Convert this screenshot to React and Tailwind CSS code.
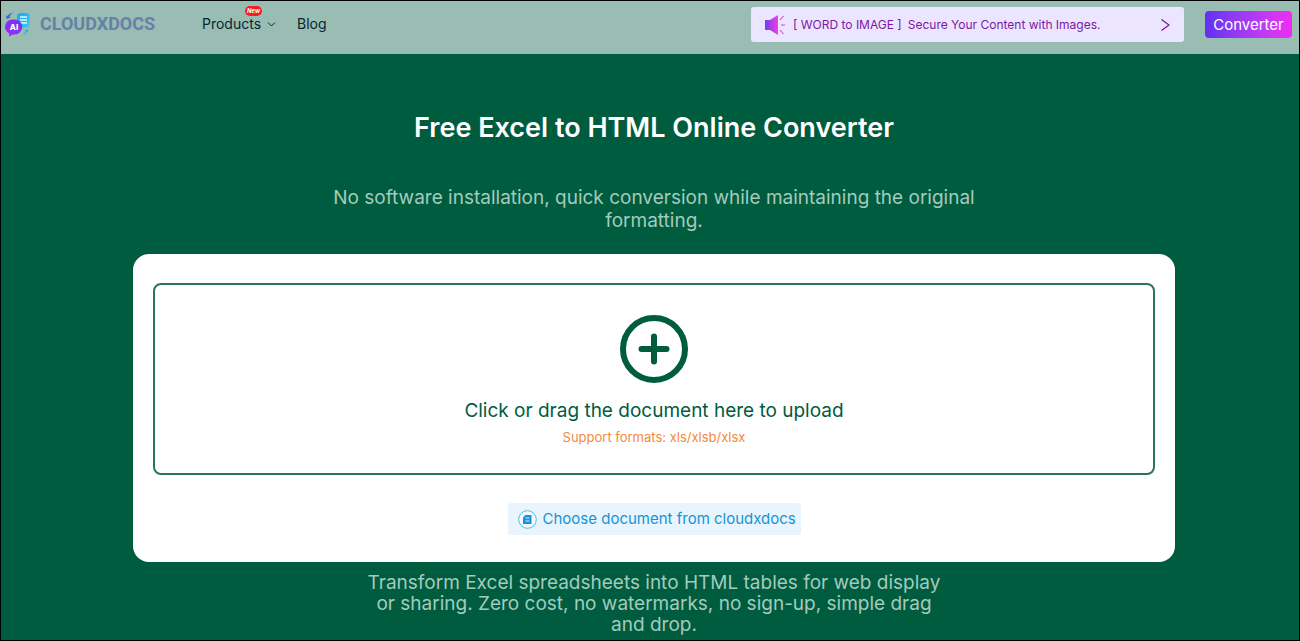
function Logo() {
  return (
    <svg className="h-[26px] w-[26px] shrink-0" viewBox="0 0 26 26" aria-hidden="true">
      <defs>
        <linearGradient id="logoDoc" x1="0" y1="0" x2="1" y2="1">
          <stop offset="0" stopColor="#1aa5f0" />
          <stop offset="1" stopColor="#3cc8fa" />
        </linearGradient>
        <linearGradient id="logoBubble" x1="0" y1="1" x2="1" y2="0">
          <stop offset="0" stopColor="#a22bf5" />
          <stop offset="1" stopColor="#6d36ee" />
        </linearGradient>
      </defs>
      <rect x="12" y="2" width="12.500" height="14.500" rx="4" fill="url(#logoDoc)" />
      <path d="M15 6h7M15 9h7M15 12h7" stroke="#e2f6ff" strokeWidth="1.600" />
      <path d="M9 1.500C5.500 2 3.500 3 2.500 5L1 4.500l.5 3.500L6 6.500 4.500 5.700C5 4 6.500 2.500 9 1.500Z" fill="#4268d8" />
      <path d="M17 24.500c3-.5 4.500-2 5-4l1.500.6-.7-3-3.500 1.600 1.400.5c-.5 2-1.700 3.300-3.700 4.300Z" fill="#27aee9" />
      <path d="M9 8.500a8.200 7.500 0 1 1-1.200 14.900L4 25.500 4.200 22.500A8.200 7.500 0 0 1 9 8.500Z" fill="url(#logoBubble)" />
      <text x="9" y="19" textAnchor="middle" fontFamily="Inter, sans-serif" fontSize="8" fontWeight="800" fill="#fff">AI</text>
    </svg>
  );
}

function Speaker() {
  return (
    <svg className="h-5 w-[21px] shrink-0" viewBox="0 0 21 20" aria-hidden="true">
      <defs>
        <linearGradient id="speaker" x1="0" y1="0" x2="1" y2="0">
          <stop offset="0" stopColor="#7040f5" />
          <stop offset="1" stopColor="#f03fe0" />
        </linearGradient>
      </defs>
      <path d="M0 5h5L13 0v20L5 15H0Z" fill="url(#speaker)" />
      <path d="M15 5l3.500-4M16 10h4M15 15l3.500 4" stroke="#e03fe0" strokeWidth="1.100" fill="none" />
    </svg>
  );
}

function Header() {
  return (
    <header className="flex h-[53px] items-start bg-[#99bdb2] pl-1 pr-[7px]">
      <a href="#home" className="mt-[10px] flex w-[156px] items-center gap-[9px]">
        <Logo />
        <span className="font-['Roboto',sans-serif] text-[18px] leading-[26px] font-bold text-[#6681a8]">CLOUDXDOCS</span>
      </a>
      <nav className="mt-[11px] ml-[41px] flex gap-[21px] text-[14px] leading-6 text-[#082532]">
        <button type="button" className="relative flex items-center gap-[6px]">
          Products
          <svg className="h-[9px] w-[9px]" viewBox="0 0 9 9" fill="none" stroke="currentColor" aria-hidden="true">
            <path d="M1 2.500 4.500 6 8 2.500" />
          </svg>
          <span className="absolute -top-[6px] left-[43px] h-[10px] rounded-full bg-[#f71c20] px-[2px] text-[6px] leading-[10px] font-bold text-white italic">New</span>
        </button>
        <a href="#blog">Blog</a>
      </nav>
      <a
        href="#word-to-image"
        className="mt-[6px] ml-auto flex h-[35px] w-[433px] items-center rounded-[3px] bg-[#ece5ff] px-[14px] text-[12px] text-[#7a18a5]"
      >
        <Speaker />
        <span className="ml-[7px] whitespace-nowrap">[ WORD to IMAGE ]</span>
        <span className="ml-[6px] whitespace-nowrap">Secure Your Content with Images.</span>
        <svg className="ml-auto h-3 w-[9px]" viewBox="0 0 9 12" fill="none" stroke="currentColor" strokeWidth="1.300" aria-hidden="true">
          <path d="M.5.5 8 6 .5 11.500" />
        </svg>
      </a>
      <button
        type="button"
        className="mt-[10px] ml-[21px] h-[27px] w-[87px] rounded-[4px] bg-linear-to-r from-[#6030f2] to-[#ee2bf2] text-[15px] leading-6 text-white"
      >
        Converter
      </button>
    </header>
  );
}

function UploadArea() {
  return (
    <label className="flex h-[192px] cursor-pointer flex-col items-center rounded-lg border-2 border-[#2b745c] pt-[29px]">
      <input type="file" accept=".xls,.xlsb,.xlsx" className="sr-only" />
      <svg className="h-[70px] w-[70px]" viewBox="0 0 70 70" fill="none" stroke="#005c3e" strokeWidth="6" strokeLinecap="round" aria-hidden="true">
        <circle cx="35" cy="35" r="31" />
        <path d="M35 22.500v25M22.500 35h25" />
      </svg>
      <span className="mt-[13px] text-[19px] leading-7 text-[#005c3e]">Click or drag the document here to upload</span>
      <span className="mt-[2px] text-[13px] leading-5 text-[#f28a3c]">Support formats: xls/xlsb/xlsx</span>
    </label>
  );
}

export default function App() {
  return (
    <div className="flex min-h-screen flex-col border border-black bg-[#005c3e] font-['Inter',sans-serif]">
      <Header />
      <main className="flex flex-col items-center pl-2">
        <h1 className="mt-[54px] text-center text-[27px] leading-10 font-semibold text-white">Free Excel to HTML Online Converter</h1>
        <p className="mt-[38px] max-w-[680px] text-center text-[19px] leading-[23px] text-[#a3cbbd]">
          No software installation, quick conversion while maintaining the original formatting.
        </p>
        <div className="mt-[22px] w-full px-[124px]">
          <section className="rounded-2xl bg-white px-5 pt-[29px] pb-[27px]">
            <UploadArea />
            <button
              type="button"
              className="mx-auto mt-7 flex h-8 w-[293px] items-center gap-[6px] rounded-[3px] bg-[#e8f5ff] pl-[10px] text-[15px] whitespace-nowrap text-[#1893d2]"
            >
              <svg className="h-[19px] w-[19px] shrink-0" viewBox="0 0 19 19" aria-hidden="true">
                <circle cx="9.500" cy="9.500" r="8.800" fill="#f3faff" stroke="#3aa3da" strokeWidth=".8" />
                <path d="M7.500 5h6v9h-8.500V7.500Z" fill="#1893d2" />
                <path d="M7.500 8h4M7.500 11h4" stroke="#d5efff" />
              </svg>
              Choose document from cloudxdocs
            </button>
          </section>
        </div>
        <p className="mt-[10px] max-w-[580px] text-center text-[19px] leading-[21px] text-[#a3cbbd]">
          Transform Excel spreadsheets into HTML tables for web display or sharing. Zero cost, no watermarks, no sign-up, simple drag and drop.
        </p>
      </main>
    </div>
  );
}
